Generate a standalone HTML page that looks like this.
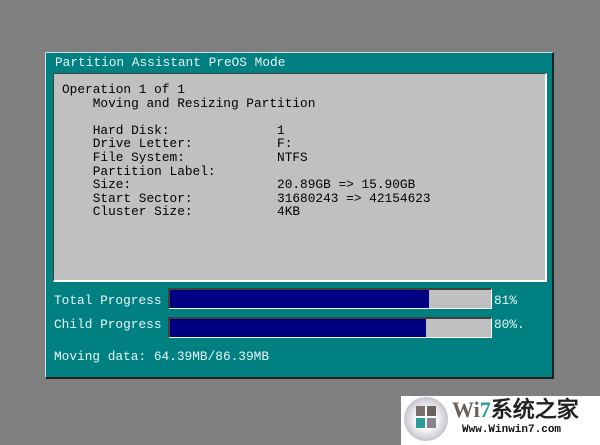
<!DOCTYPE html>
<html><head><style>
body{margin:0;width:600px;height:445px;background:#808080;position:relative;overflow:hidden;font-family:"Liberation Mono",monospace;font-size:12.8px;}
.t{position:absolute;white-space:pre;line-height:13.6px;}
#win{position:absolute;left:45px;top:52px;width:506px;height:324px;background:#008080;border-top:1px solid #c8e0e0;border-left:1px solid #c8e0e0;border-right:2px solid #202020;border-bottom:2px solid #202020;}
#panel{position:absolute;left:53px;top:73px;width:491px;height:206px;background:#c0c0c0;border-top:1px solid #404040;border-left:1px solid #404040;border-right:2px solid #fff;border-bottom:2px solid #fff;}
.w{color:#e8f4f4}
.k{color:#000}
.bar{position:absolute;left:168px;width:321px;height:18px;background:#c0c0c0;border-top:2px solid #404040;border-left:2px solid #404040;border-right:1px solid #fff;border-bottom:1px solid #fff;}
.bar div{height:100%;background:#000080;}
</style></head><body>
<div id="win"></div>
<div class="t w" style="left:55px;top:56px">Partition Assistant PreOS Mode</div>
<div id="panel"></div>
<div class="t k" style="left:62px;top:83px">Operation 1 of 1
    Moving and Resizing Partition

    Hard Disk:              1
    Drive Letter:           F:
    File System:            NTFS
    Partition Label:
    Size:                   20.89GB => 15.90GB
    Start Sector:           31680243 => 42154623
    Cluster Size:           4KB</div>
<div class="t w" style="left:54px;top:294px">Total Progress</div>
<div class="bar" style="top:288px"><div style="width:259px"></div></div>
<div class="t w" style="left:494px;top:294px">81%</div>
<div class="t w" style="left:54px;top:318px">Child Progress</div>
<div class="bar" style="top:317px"><div style="width:256px"></div></div>
<div class="t w" style="left:494px;top:318px">80%.</div>
<div class="t w" style="left:54px;top:350px">Moving data: 64.39MB/86.39MB</div>
<div style="position:absolute;left:401px;top:396px;width:199px;height:49px;background:#fff"></div>
<div style="position:absolute;left:404px;top:397px;width:44px;height:44px;border-radius:50%;background:radial-gradient(circle,#fff 30%,#c8c4cc 70%,#9a96a0);"></div>
<div style="position:absolute;left:416px;top:406px;width:9px;height:10px;background:#7a6f6a"></div>
<div style="position:absolute;left:427px;top:406px;width:9px;height:10px;background:#6a625f"></div>
<div style="position:absolute;left:416px;top:418px;width:9px;height:10px;background:#2a9a9a"></div>
<div style="position:absolute;left:427px;top:418px;width:9px;height:10px;background:#8a8290"></div>
<div class="t" style="left:452px;top:398px;font-family:'Liberation Serif',serif;font-weight:bold;font-size:22px;line-height:24px;color:#6a6058">Wi<span style="color:#2a9a9a">7</span><span style="color:#222">系统之家</span></div>
<div class="t" style="left:462px;top:424px;font-size:11px;font-weight:bold;color:#111">Www.Winwin7.com</div>
</body></html>
